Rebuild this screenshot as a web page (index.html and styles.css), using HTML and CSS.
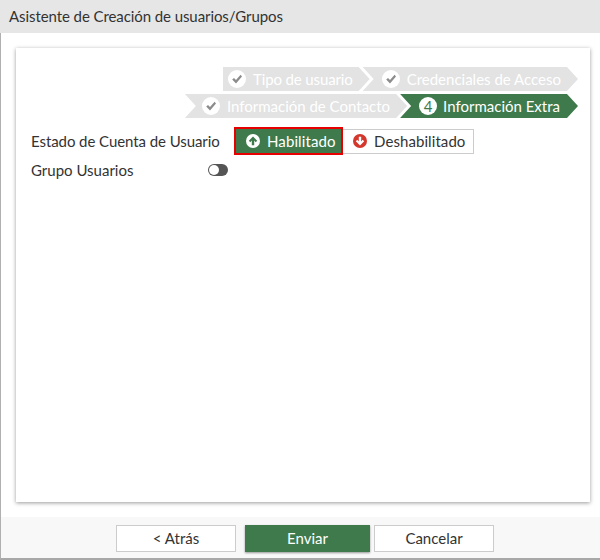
FILE: index.html
```html
<!DOCTYPE html>
<html lang="es">
<head>
<meta charset="utf-8">
<title>Asistente</title>
<link rel="stylesheet" href="styles.css">
</head>
<body>
<div class="window">
  <header class="title">Asistente de Creación de usuarios/Grupos</header>
  <main class="content">
    <section class="card">
      <div class="steps">
        <div class="step-row">
          <div class="step step-first done"><span class="badge"><svg viewBox="0 0 12 12" class="check"><path d="M1.2 6.6 3 4.9 5 7 9.6 1.8 11 3.4 5 10.6z"/></svg></span>Tipo de usuario</div>
          <div class="step step-second done"><span class="badge"><svg viewBox="0 0 12 12" class="check"><path d="M1.2 6.6 3 4.9 5 7 9.6 1.8 11 3.4 5 10.6z"/></svg></span>Credenciales de Acceso</div>
        </div>
        <div class="step-row">
          <div class="step step-third done"><span class="badge"><svg viewBox="0 0 12 12" class="check"><path d="M1.2 6.6 3 4.9 5 7 9.6 1.8 11 3.4 5 10.6z"/></svg></span>Información de Contacto</div>
          <div class="step active"><span class="badge">4</span>Información Extra</div>
        </div>
      </div>
      <div class="field">
        <span class="label label-state">Estado de Cuenta de Usuario</span>
        <div class="choice">
          <button class="opt opt-on"><svg class="opt-icon" viewBox="0 0 14 14"><circle cx="7" cy="7" r="7" fill="#fff"/><path d="M7 2.4 11.2 6.8 9.7 8.2 8.2 6.6V11.2H5.8V6.6L4.3 8.2 2.8 6.8z" fill="#3f7a4c"/></svg>Habilitado</button>
          <button class="opt opt-off"><svg class="opt-icon" viewBox="0 0 14 14"><circle cx="7" cy="7" r="7" fill="#d4372c"/><path d="M7 11.6 2.8 7.2 4.3 5.8 5.8 7.4V2.8H8.2V7.4L9.7 5.8 11.2 7.2z" fill="#fff"/></svg>Deshabilitado</button>
        </div>
      </div>
      <div class="field field-toggle">
        <span class="label">Grupo Usuarios</span>
        <span class="toggle"><span class="knob"></span></span>
      </div>
    </section>
  </main>
  <footer class="footer">
    <button class="btn">&lt; Atrás</button>
    <button class="btn btn-primary">Enviar</button>
    <button class="btn">Cancelar</button>
  </footer>
</div>
</body>
</html>
```
FILE: styles.css
```css
* { box-sizing: border-box; }
html, body { margin: 0; height: 100%; }
body { font-family: Lato, sans-serif; font-size: 15px; color: #333; background: #fff; overflow: hidden; }
.window { height: 560px; display: flex; flex-direction: column; border-left: 1px solid #b0b0b0; border-bottom: 2px solid #a8a8a8; }
.title { height: 33px; margin-left: -1px; background: #e6e6e6; padding: 7px 0 0 9px; line-height: 18px; font-size: 15px; letter-spacing: -0.08px; color: #333; }
.content { flex: 1; padding: 15px 10px 15px 15px; background: #fff; display: flex; min-height: 0; }
.card { flex: 1; background: #fff; box-shadow: 0 1px 4px rgba(0,0,0,.4); padding: 19px 12px 0 15px; }
.steps { display: flex; flex-direction: column; gap: 3px; margin-bottom: 9px; }
.step-row { display: flex; justify-content: flex-end; }
.step { height: 24px; display: flex; align-items: center; margin-left: -7px; padding: 0 18px 0 18px; background: #e3e3e3; color: #fff; line-height: 24px; white-space: nowrap;
  clip-path: polygon(0 0, calc(100% - 11px) 0, 100% 50%, calc(100% - 11px) 100%, 0 100%, 11px 50%); }
.step-first { padding-left: 5px; padding-right: 17px; letter-spacing: -0.13px; clip-path: polygon(0 0, calc(100% - 11px) 0, 100% 50%, calc(100% - 11px) 100%, 0 100%); }
.step-second { padding-left: 19px; padding-right: 17px; }
.step-third { padding-left: 17px; padding-right: 17px; }
.step.active { background: #3f7a4c; padding-left: 19px; }
.step.active .badge { margin-right: 6px; }
.badge { width: 18px; height: 18px; border-radius: 50%; background: #fff; margin-right: 7px; display: flex; align-items: center; justify-content: center; flex: none; font-size: 15px; letter-spacing: 0; color: #3f7a4c; line-height: 18px; }
.check { width: 12px; height: 12px; fill: #8c8c8c; }
.field { display: flex; align-items: center; }
.label { width: 203px; flex: none; }
.label-state { letter-spacing: -0.07px; }
.choice { display: flex; align-items: center; }
.opt { font: inherit; display: flex; align-items: center; background: #fff; cursor: pointer; }
.opt-icon { width: 14px; height: 14px; margin-right: 7px; flex: none; }
.opt-on { width: 109px; height: 28px; background: #3f7a4c; color: #fff; border: 2px solid #e60000; padding: 0 0 1px 10px; letter-spacing: 0.1px; }
.opt-off { width: 131px; height: 25px; border: 1px solid #ccc; border-left: 0; color: #333; padding: 0 0 1px 10px; letter-spacing: 0.08px; }
.field-toggle { margin-top: 1px; height: 28px; }
.field-toggle .label { width: 177px; }
.toggle { width: 20px; height: 12px; border-radius: 6px; background: #555; display: block; padding: 1px; }
.knob { display: block; width: 10px; height: 10px; border-radius: 50%; background: #fff; }
.footer { height: 41px; background: #f8f8f8; display: flex; justify-content: flex-start; align-items: flex-start; gap: 9px; padding: 8px 0 0 115px; flex: none; }
.btn { font: inherit; width: 120px; height: 27px; background: #fff; color: #333; border: 1px solid #ccc; padding: 0 0 2px; }
.btn-primary { width: 125px; margin-right: -5px; background: #3f7a4c; color: #fff; border: 0; box-shadow: 0 1px 2px rgba(0,0,0,.4); }
```
